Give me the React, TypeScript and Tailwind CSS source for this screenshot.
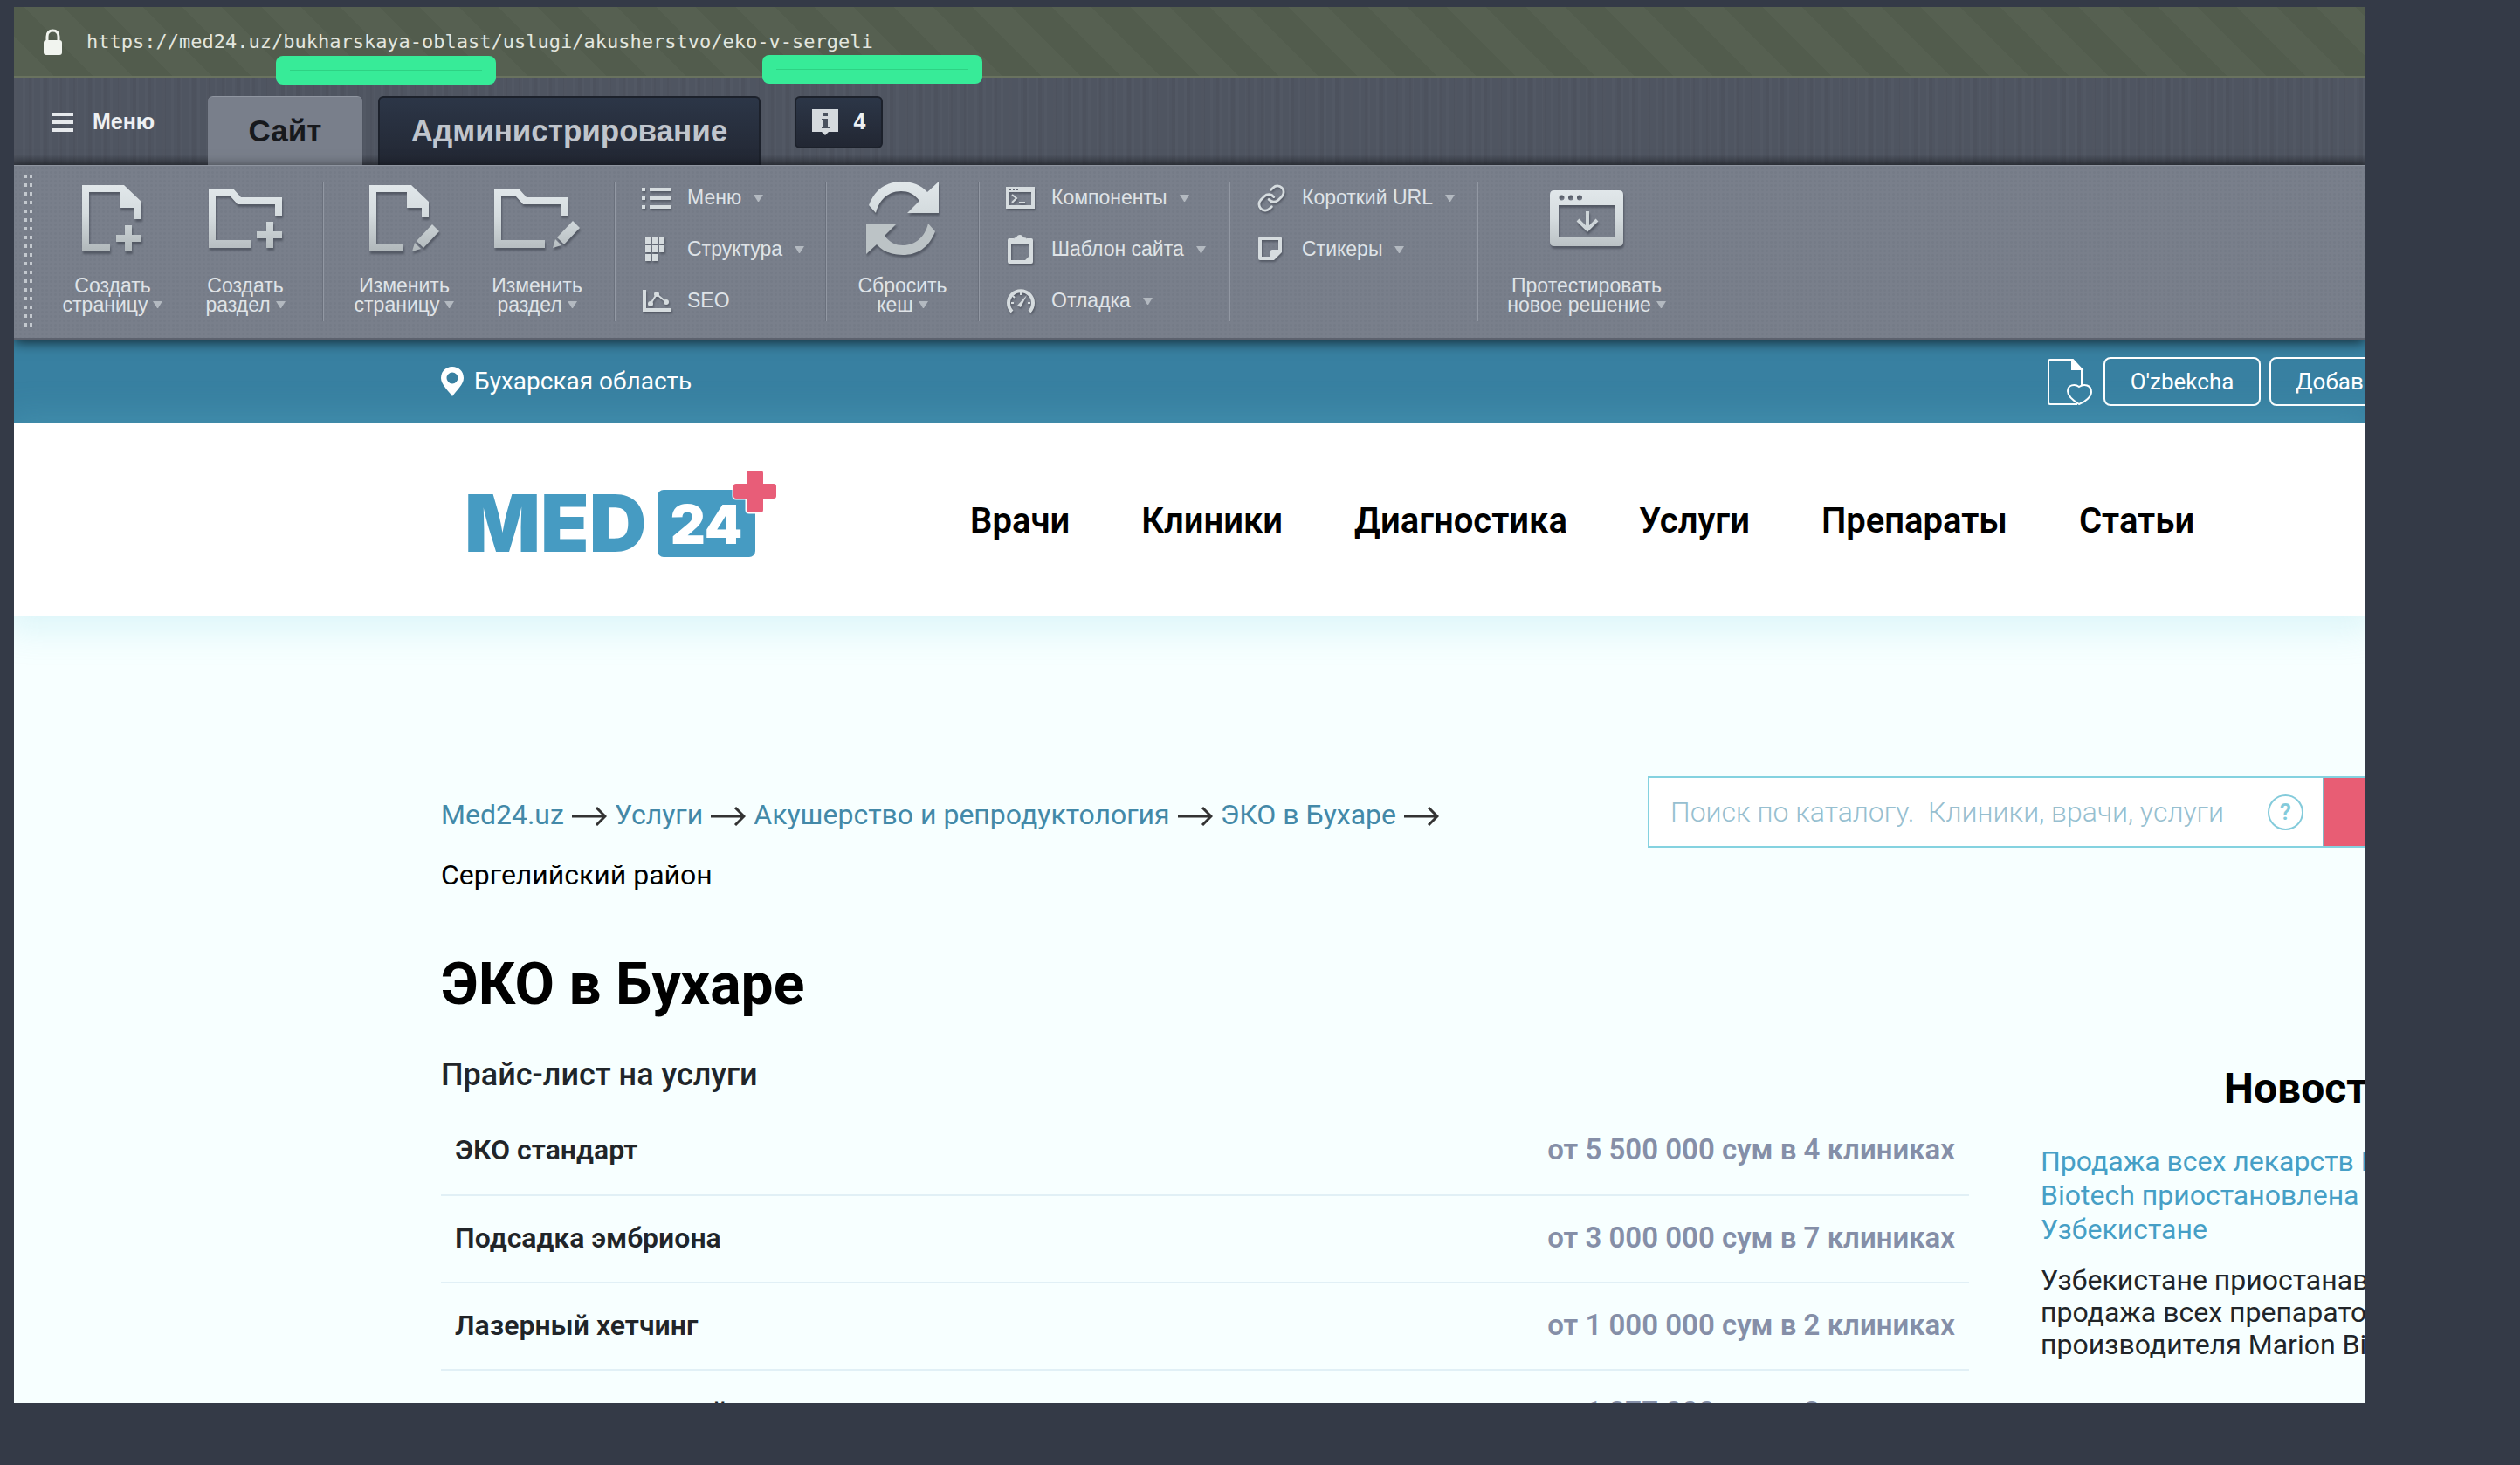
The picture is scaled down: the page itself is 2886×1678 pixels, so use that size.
import type { ReactNode } from 'react'
import { Link as LinkIcon } from 'lucide-react'

interface ToolItem {
  label: string
  icon: ReactNode
  caret?: boolean
}

interface PriceRow {
  name: string
  price: string
}

const navItems = ['Врачи', 'Клиники', 'Диагностика', 'Услуги', 'Препараты', 'Статьи']

const crumbs = ['Med24.uz', 'Услуги', 'Акушерство и репродуктология', 'ЭКО в Бухаре']

const prices: PriceRow[] = [
  { name: 'ЭКО стандарт', price: 'от 5 500 000 сум в 4 клиниках' },
  { name: 'Подсадка эмбриона', price: 'от 3 000 000 сум в 7 клиниках' },
  { name: 'Лазерный хетчинг', price: 'от 1 000 000 сум в 2 клиниках' },
  { name: 'Криоперенос второй', price: 'от 1 277 000 сум в 2 клиниках' }
]

function BigIcon({ width, height, children }: { width: number; height: number; children: ReactNode }) {
  return (
    <svg
      width={width}
      height={height}
      viewBox={`0 0 ${width} ${height}`}
      fill="url(#metal)"
      className="drop-shadow-[1px_3px_1px_rgba(60,65,77,0.6)]"
      aria-hidden="true"
    >
      {children}
    </svg>
  )
}

function SmallIcon({ children }: { children: ReactNode }) {
  return (
    <svg
      width="34"
      height="34"
      viewBox="0 0 34 34"
      fill="#d6dcdf"
      className="shrink-0 drop-shadow-[1px_2px_1px_rgba(60,65,77,0.6)]"
      aria-hidden="true"
    >
      {children}
    </svg>
  )
}

const pageEditPath = 'M0 0H48L68 19V37H60V26H43V8H8V68H39V76H0Z'
const pageAddPath = 'M0 0H48L68 19V39H60V26H43V8H8V68H32V76H0Z'
const folderAddPath = 'M0 0H28L37 10H84V31H76V18H33L24 8H8V59H48V68H0Z'
const folderEditPath = 'M0 0H28L37 10H84V31H76V18H33L24 8H8V59H58V68H0Z'
const reloadPath =
  'M3 27C10 8 24 0 40 0C53 0 63 4 70 12L83 0V36H47L61 22C55 14 48 11 40 11C26 11 15 20 11 36Z'

const createTools: ToolItem[] = [
  {
    label: 'Создать страницу',
    icon: (
      <BigIcon width={70} height={76}>
        <path d={pageAddPath} />
        <path d="M49 46H57V57H68V65H57V76H49V65H39V57H49Z" />
      </BigIcon>
    )
  },
  {
    label: 'Создать раздел',
    icon: (
      <BigIcon width={84} height={68}>
        <path d={folderAddPath} />
        <path d="M66 38H74V49H84V57H74V68H66V57H55V49H66Z" />
      </BigIcon>
    )
  }
]

const editTools: ToolItem[] = [
  {
    label: 'Изменить страницу',
    icon: (
      <BigIcon width={80} height={76}>
        <path d={pageEditPath} />
        <path d="M72 45L80 53L62 72L54 64Z" />
        <path d="M52 66L59 73L49 76Z" />
      </BigIcon>
    )
  },
  {
    label: 'Изменить раздел',
    icon: (
      <BigIcon width={98} height={68}>
        <path d={folderEditPath} />
        <path d="M90 37L98 45L80 64L72 56Z" />
        <path d="M70 58L77 65L67 68Z" />
      </BigIcon>
    )
  }
]

const resetTool: ToolItem = {
  label: 'Сбросить кеш',
  icon: (
    <BigIcon width={84} height={84}>
      <path d={reloadPath} />
      {/* lower arrow: the upper one turned by half a circle, in the dark end of the metal */}
      <path d={reloadPath} transform="rotate(180 41 42)" fill="#bcc3c6" />
    </BigIcon>
  )
}

const testTool: ToolItem = {
  label: 'Протестировать новое_решение',
  icon: (
    <BigIcon width={84} height={64}>
      <path
        fillRule="evenodd"
        d="M5 0H79Q84 0 84 5V59Q84 64 79 64H5Q0 64 0 59V5Q0 0 5 0ZM10 17V54H74V17Z
           M10.500 8.500a3 3 0 1 0 6 0a3 3 0 1 0-6 0ZM21 8.500a3 3 0 1 0 6 0a3 3 0 1 0-6 0ZM31 8.500a3 3 0 1 0 6 0a3 3 0 1 0-6 0Z"
      />
      <path d="M43 24V44M32 34L43 45L54 34" fill="none" stroke="#cfd6d9" strokeWidth="4" />
    </BigIcon>
  )
}

const structureTools: ToolItem[] = [
  {
    label: 'Меню',
    caret: true,
    icon: (
      <SmallIcon>
        <path d="M0 5H4V9H0ZM9 5H33V9H9ZM0 15H4V19H0ZM9 15H33V19H9ZM0 25H4V29H0ZM9 25H33V29H9Z" />
      </SmallIcon>
    )
  },
  {
    label: 'Структура',
    caret: true,
    icon: (
      <SmallIcon>
        <path d="M4 2H10V10H4ZM12 2H18V10H12ZM20 2H26V10H20ZM4 12H10V20H4ZM12 12H18V20H12ZM20 12H26V20H20ZM4 22H10V30H4ZM12 22H18V30H12Z" />
      </SmallIcon>
    )
  },
  {
    label: 'SEO',
    icon: (
      <SmallIcon>
        <path d="M1 4H5V25H34V29H1Z" />
        <path d="M10 20L17 9L28 18" fill="none" stroke="#d6dcdf" strokeWidth="2" />
        <circle cx="10" cy="20" r="3" />
        <circle cx="17" cy="9" r="3" />
        <circle cx="28" cy="18" r="3" />
      </SmallIcon>
    )
  }
]

const templateTools: ToolItem[] = [
  {
    label: 'Компоненты',
    caret: true,
    icon: (
      <SmallIcon>
        <path fillRule="evenodd" d="M0 4H33V29H0ZM4 10V25H29V10ZM4 6V8H6V6ZM8 6V8H10V6ZM12 6V8H14V6Z" />
        <path d="M7 13L12 17L7 22M15 22H22" fill="none" stroke="#d6dcdf" strokeWidth="2" />
      </SmallIcon>
    )
  },
  {
    label: 'Шаблон сайта',
    caret: true,
    icon: (
      <SmallIcon>
        <path
          fillRule="evenodd"
          d="M4 4H9V9H24V4H29Q31 4 31 6V31Q31 33 29 33H4Q2 33 2 31V6Q2 4 4 4ZM6 10V29H22L27 24V10Z"
        />
        <path d="M9 9V5Q9 3 12 3Q13 0 16 0T20 3Q24 3 24 5V9Z" />
      </SmallIcon>
    )
  },
  {
    label: 'Отладка',
    caret: true,
    icon: (
      <SmallIcon>
        <path d="M7 29A14 14 0 1 1 27 29" fill="none" stroke="#d6dcdf" strokeWidth="4" />
        <path d="M13 22L24 10L17 24Z" />
        <path d="M17 7V10M8 11L10 13M6 19H9M25 19H28" stroke="#d6dcdf" strokeWidth="2" />
      </SmallIcon>
    )
  }
]

const miscTools: ToolItem[] = [
  {
    label: 'Короткий URL',
    caret: true,
    icon: (
      <LinkIcon
        size={34}
        strokeWidth={2}
        color="#d6dcdf"
        className="shrink-0 drop-shadow-[1px_2px_1px_rgba(60,65,77,0.6)]"
      />
    )
  },
  {
    label: 'Стикеры',
    caret: true,
    icon: (
      <SmallIcon>
        <path
          fillRule="evenodd"
          d="M4 2H27Q29 2 29 4V20L20 29H4Q2 29 2 27V4Q2 2 4 2ZM6 6V25H16V19Q16 17 18 17H25V6Z"
        />
      </SmallIcon>
    )
  }
]

function Caret() {
  return (
    <svg width="11" height="8" viewBox="0 0 11 8" className="inline-block shrink-0" aria-hidden="true">
      <path d="M0 0H11L6 8H5Z" fill="#b3b9c0" />
    </svg>
  )
}

function BigTool({ item }: { item: ToolItem }) {
  const [first, second] = item.label.split(' ')
  return (
    <button type="button" className="flex w-[152px] flex-col items-center">
      <span className="flex h-[84px] items-center justify-center">{item.icon}</span>
      <span className="mt-6 leading-[22px]">{first}</span>
      <span className="flex items-center gap-[6px] leading-[22px] whitespace-nowrap">
        {second.replace('_', ' ')}
        <Caret />
      </span>
    </button>
  )
}

function SmallTools({ items }: { items: ToolItem[] }) {
  return (
    <div className="-mt-[11px] flex flex-col pl-[30px]">
      {items.map((item) => (
        <button key={item.label} type="button" className="flex h-[59px] items-center whitespace-nowrap">
          {item.icon}
          <span className="mr-[14px] ml-[18px]">{item.label}</span>
          {item.caret && <Caret />}
        </button>
      ))}
    </div>
  )
}

function Divider() {
  return <div className="h-40 w-[2px] shrink-0 border-l border-[#6a707c] bg-[#9298a3]" />
}

function AddressBar() {
  return (
    <div className="flex h-[81px] shrink-0 items-center border-b-2 border-[#69725f] bg-[repeating-linear-gradient(45deg,#566051_0px,#566051_32px,#525c4d_32px,#525c4d_64px)] pl-[34px]">
      <svg width="21" height="30" viewBox="0 0 21 30" aria-hidden="true">
        <path d="M4 14V9Q4 2 10.500 2T17 9V14" fill="none" stroke="#f1f4ef" strokeWidth="3" />
        <rect y="13" width="21" height="17" rx="3" fill="#f1f4ef" />
      </svg>
      <span className="ml-7 font-['DejaVu_Sans_Mono',monospace] text-[22px] text-[#e3e6df]">
        https://med24.uz/bukharskaya-oblast/uslugi/akusherstvo/eko-v-sergeli
      </span>
    </div>
  )
}

function TabBar() {
  return (
    <div className="h-[100px] shrink-0 bg-[linear-gradient(to_bottom,transparent_88%,rgba(40,44,53,0.6)),repeating-linear-gradient(90deg,rgba(255,255,255,0.02)_0px,rgba(255,255,255,0.02)_3px,transparent_3px,transparent_10px),repeating-linear-gradient(90deg,rgba(0,0,0,0.03)_0px,rgba(0,0,0,0.03)_4px,transparent_4px,transparent_17px)] bg-[#4f5561]">
      <div className="flex h-full items-start pt-[21px] pl-11">
        <button type="button" className="flex h-[60px] w-[178px] items-center gap-[22px] text-[25px] font-bold text-[#eef0f2]">
          <svg width="24" height="22" viewBox="0 0 24 22" fill="#e6e9ec" aria-hidden="true">
            <path d="M0 0H24V4H0ZM0 9H24V13H0ZM0 18H24V22H0Z" />
          </svg>
          Меню
        </button>
        <a
          href="#site"
          className="flex h-[79px] w-[177px] items-center justify-center rounded-t-md border-t border-[#9096a1] bg-[#797f8b] text-[35px] font-bold text-[#17191d]"
        >
          Сайт
        </a>
        <a
          href="#admin"
          className="ml-[18px] flex h-[79px] w-[438px] items-center justify-center rounded-t-md border-2 border-b-0 border-[#1c212b] bg-linear-to-b from-[#2c3647] to-[#222733] text-[35px] font-bold text-[#c0c5cc]"
        >
          Администрирование
        </a>
        <button
          type="button"
          className="ml-[39px] flex h-[60px] w-[101px] items-center justify-center gap-[18px] rounded-md border-2 border-[#1c212b] bg-linear-to-b from-[#2c3647] to-[#222733] text-[25px] font-bold text-[#eef0f2]"
        >
          <svg width="30" height="30" viewBox="0 0 30 30" aria-hidden="true">
            <path d="M0 0H30V26H19L15 30L11 26H0Z" fill="#d5dade" />
            <path d="M13 4H18V8H13ZM11 11H18V20H20V22H11V20H13V13H11Z" fill="#4a525f" />
          </svg>
          4
        </button>
      </div>
    </div>
  )
}

function ToolPanel() {
  return (
    <div className="relative z-20 flex h-[200px] shrink-0 items-start border-t border-b-2 border-t-[#8e949f] border-b-[#5d626e] bg-[radial-gradient(#757b87_1px,transparent_2px)] bg-[length:5px_5px] bg-[#797f8b] pt-[18px] pl-3 text-[23px] text-[#dfe3e7] shadow-[0_3px_14px_rgba(0,0,0,0.7)]">
      <div className="-mt-2 h-[178px] w-[9px] shrink-0 bg-[linear-gradient(90deg,#c3c8ce_3px,transparent_3px,transparent_6px,#c3c8ce_6px)]">
        <div className="h-full bg-[repeating-linear-gradient(to_bottom,transparent_0px,transparent_4px,#777d89_4px,#777d89_10px)]" />
      </div>
      <div className="flex pr-3 pl-4">
        {createTools.map((item) => (
          <BigTool key={item.label} item={item} />
        ))}
      </div>
      <Divider />
      <div className="flex pr-3 pl-4">
        {editTools.map((item) => (
          <BigTool key={item.label} item={item} />
        ))}
      </div>
      <Divider />
      <div className="w-[240px]">
        <SmallTools items={structureTools} />
      </div>
      <Divider />
      <div className="flex w-[173px] justify-center">
        <BigTool item={resetTool} />
      </div>
      <Divider />
      <div className="w-[285px]">
        <SmallTools items={templateTools} />
      </div>
      <Divider />
      <div className="w-[282px]">
        <SmallTools items={miscTools} />
      </div>
      <Divider />
      <div className="flex w-[248px] justify-center">
        <BigTool item={testTool} />
      </div>
    </div>
  )
}

function TopBar() {
  return (
    <div className="flex h-24 shrink-0 items-center bg-[#3880a1] pl-[489px] text-white">
      <button type="button" className="flex items-center gap-3 text-[28px]">
        <svg width="26" height="34" viewBox="0 0 26 34" fill="#fff" aria-hidden="true">
          <path
            fillRule="evenodd"
            d="M13 0C20 0 26 5 26 13C26 20 18 27 13 34C8 27 0 20 0 13C0 5 6 0 13 0ZM13 6.500a6.500 6.500 0 1 0 0 13a6.500 6.500 0 1 0 0-13Z"
          />
        </svg>
        Бухарская область
      </button>
      <div className="ml-auto flex w-[364px] shrink-0 items-center overflow-hidden text-[26px]">
        <button type="button" aria-label="Избранное" className="mr-[13px] shrink-0">
          <svg width="51" height="53" viewBox="0 0 51 53" fill="none" stroke="#fff" strokeWidth="2" aria-hidden="true">
            <path d="M39 30V12L29 1H3Q1 1 1 3V50Q1 52 3 52H34" />
            <path d="M28 1V12H39Z" fill="#fff" />
            <path d="M36 52C28 47 23 42 23 37C23 30 31 28 36 32C42 28 50 30 50 38C50 43 44 49 36 52Z" fill="#3880a1" />
          </svg>
        </button>
        <button type="button" className="h-14 w-[180px] shrink-0 rounded-lg border-2 border-white">
          O&apos;zbekcha
        </button>
        <button type="button" className="ml-[10px] h-14 shrink-0 rounded-lg border-2 border-white px-7 whitespace-nowrap">
          Добавить клинику
        </button>
      </div>
    </div>
  )
}

function Logo() {
  return (
    <svg width="353" height="100" viewBox="0 0 353 100" role="img" aria-label="MED24">
      <text x="-4" y="94" fill="#469bc2" fontFamily="Inter, sans-serif" fontSize="91" fontWeight="900">
        MED
      </text>
      <rect x="217" y="23" width="112" height="77" rx="7" fill="#469bc2" />
      <text x="273" y="85" textAnchor="middle" fill="#fff" fontFamily="Inter, sans-serif" fontSize="62" fontWeight="900">
        24
      </text>
      <path
        d="M322 1H335Q338 1 338 4V16H350Q353 16 353 19V30Q353 33 350 33H338V46Q338 49 335 49H322Q319 49 319 46V33H307Q304 33 304 30V19Q304 16 307 16H319V4Q319 1 322 1Z"
        fill="#e85d78"
        stroke="#fff"
        strokeWidth="3"
        paintOrder="stroke"
      />
    </svg>
  )
}

function SiteHeader() {
  return (
    <header className="relative z-10 flex h-[220px] shrink-0 items-center bg-white pl-[520px] shadow-[0_4px_40px_10px_rgba(110,205,225,0.22)]">
      <a href="#home" className="pb-[14px]">
        <Logo />
      </a>
      <nav className="ml-[222px] flex gap-[82px] pt-[3px] text-[40px] font-semibold text-black">
        {navItems.map((item) => (
          <a key={item} href="#nav">
            {item}
          </a>
        ))}
      </nav>
    </header>
  )
}

function CrumbArrow() {
  return (
    <svg width="40" height="24" viewBox="0 0 40 24" fill="none" stroke="#333" strokeWidth="3" aria-hidden="true">
      <path d="M0 13H38M28 3L38 13L28 23" />
    </svg>
  )
}

function Breadcrumbs() {
  return (
    <nav className="flex min-w-0 flex-1 flex-wrap items-center gap-x-[9px] pt-[10px] text-[32px] leading-[69px]">
      {crumbs.map((crumb) => (
        <span key={crumb} className="flex items-center gap-[9px]">
          <a href="#crumb" className="text-[#4389a8]">
            {crumb}
          </a>
          <CrumbArrow />
        </span>
      ))}
      <span className="text-black">Сергелийский район</span>
    </nav>
  )
}

function Search() {
  return (
    <form className="flex h-[82px] w-[822px] shrink-0 border-2 border-r-0 border-[#84d2e0] bg-white">
      <input
        type="text"
        aria-label="Поиск по каталогу"
        placeholder="Поиск по каталогу.  Клиники, врачи, услуги"
        className="min-w-0 flex-1 pl-6 text-[32px] font-light outline-none placeholder:text-[#97bfd0]"
      />
      <button
        type="button"
        className="mr-[22px] flex size-[41px] shrink-0 items-center justify-center self-center rounded-full border-2 border-[#84cbdb] text-[26px] font-semibold text-[#84cbdb]"
      >
        ?
      </button>
      <button type="button" aria-label="Найти" className="w-[49px] border-l-2 border-[#84b7c6] bg-[#e85d74]" />
    </form>
  )
}

function PriceList() {
  return (
    <section className="min-w-0 flex-1">
      <h1 className="mt-[51px] text-[66px] leading-[80px] font-bold text-black">ЭКО в Бухаре</h1>
      <h2 className="mt-[39px] text-4xl leading-[48px] font-medium">Прайс-лист на услуги</h2>
      <table className="mt-[14px] w-full text-[32px] font-semibold">
        <tbody>
          {prices.map((row) => (
            <tr key={row.name} className="h-[100px] border-b-2 border-[#e1f0f6]">
              <td className="pb-[3px] pl-4">{row.name}</td>
              <td className="pr-4 pb-[3px] text-right text-[33px] text-[#858fa8]">{row.price}</td>
            </tr>
          ))}
        </tbody>
      </table>
    </section>
  )
}

function News() {
  return (
    <aside className="w-[372px] shrink-0 pt-[180px]">
      <div className="w-[612px] text-[32px]">
        <h2 className="text-center text-5xl leading-[60px] font-bold text-black">Новости</h2>
        <a href="#news" className="mt-[34px] block leading-[39px] text-[#469fc6]">
          Продажа всех лекарств Marion
          <br />
          Biotech приостановлена в
          <br />
          Узбекистане
        </a>
        <p className="mt-5 leading-[37px]">
          Узбекистане приостанавлена
          <br />
          продажа всех препаратов
          <br />
          производителя Marion Biotech
        </p>
      </div>
    </aside>
  )
}

export default function App() {
  return (
    <div className="h-screen overflow-hidden bg-[#343a47] pt-2 pr-[177px] pb-[71px] pl-4">
      {/* Shared gradient of the large toolbar icons */}
      <svg width="0" height="0" className="absolute" aria-hidden="true">
        <linearGradient id="metal" gradientUnits="userSpaceOnUse" x1="0" y1="0" x2="0" y2="80">
          <stop offset="0" stopColor="#e1e7ea" />
          <stop offset="0.4" stopColor="#d5dcdf" />
          <stop offset="1" stopColor="#adb4b7" />
        </linearGradient>
      </svg>

      <div className="relative flex h-full flex-col overflow-hidden bg-[#f7ffff]">
        <div className="flex shrink-0 flex-col font-['Liberation_Sans',Arial,sans-serif]">
          <AddressBar />
          <TabBar />
          <ToolPanel />
        </div>

        <div className="flex flex-col font-[Roboto,sans-serif] text-[#212529]">
          <TopBar />
          <SiteHeader />
          <main className="pt-[184px] pl-[489px]">
            <div className="flex items-start">
              <Breadcrumbs />
              <Search />
            </div>
            <div className="flex gap-[82px]">
              <PriceList />
              <News />
            </div>
          </main>
        </div>

        {/* Marker strokes under the address */}
        <div className="absolute top-14 left-[300px] flex h-[33px] w-[252px] items-center rounded-lg bg-[#37eb98] px-4">
          <div className="h-px w-full bg-[#2ed284]" />
        </div>
        <div className="absolute top-[55px] left-[857px] flex h-[33px] w-[252px] items-center rounded-lg bg-[#37eb98] px-4">
          <div className="h-px w-full bg-[#2ed284]" />
        </div>
      </div>
    </div>
  )
}
